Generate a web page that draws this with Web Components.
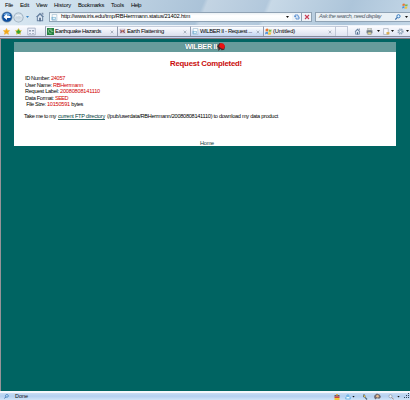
<!DOCTYPE html>
<html lang="en"><head><meta charset="utf-8"><title>Wilber II</title>
<style>html,body{margin:0;width:410px;height:400px;overflow:hidden}</style></head><body>
<wilber-browser></wilber-browser>
<script>
class FitText extends HTMLElement{
  connectedCallback(){
    const r=this.attachShadow({mode:'open'}),w=+this.getAttribute('w');
    r.innerHTML='<style>:host{display:block;flex:none;white-space:pre;line-height:1;overflow:visible}span{display:inline-block}</style><span></span>';
    const s=r.querySelector('span');s.textContent=this.getAttribute('text');
    this.style.width=w+'px';
    s.style.letterSpacing=(w-s.getBoundingClientRect().width)/s.textContent.length+'px';
  }
}
customElements.define('fit-text',FitText);

const shapes={
 back:'<circle cx="6" cy="6" r="5.6" fill="#7d96ac"/><circle cx="6" cy="6" r="4.8" fill="#0b4da0"/><path d="M2.5 3.5Q6 0 9.5 3.5L8 5H4Z" fill="#6fa5dc"/><path d="M2.4 6 6 3v2h3.5v2H6v2Z" fill="#fff"/>',
 fwd:'<circle cx="6" cy="6" r="5.5" fill="#95a9ba"/><circle cx="6" cy="6" r="4.7" fill="#d3dfe9"/><path d="M2 5Q6 1 10 5Z" fill="#f0f6fa"/><path d="M9.5 6 6 3.5V5H3v2h3v1.5Z" fill="#c9d6e0"/>',
 home:'<path d="M1 6 6 1l5 5H9.8v5H2.2V6Z" fill="#657f9f"/><path d="M3.4 6 6 3.4 8.6 6v4H3.4Z" fill="#dce8f3"/><path d="M5 7h2v4H5Z" fill="#536b8a"/><path d="M8 1h2v3L8 2.5Z" fill="#7c8ea8"/>',
 page:'<path d="M2 1h8v10H2Z" fill="#fff" stroke="#8fb0c8"/><path d="M1 5h7v5H1Z" fill="#75aed0"/><path d="M3 6h4v3H3Z" fill="#dff2fa"/>',
 star:'<path d="m6 1 1.6 3.2 3.6.4-2.7 2.5.8 3.7L6 9l-3.4 1.8.8-3.7L.8 4.6l3.6-.4Z" fill="#f2a719" stroke="#f0b336" stroke-width="1.2"/>',
 plus:'<path d="m6 1 1.6 3.2 3.6.4-2.7 2.5.8 3.7L6 9l-3.4 1.8.8-3.7L.8 4.6l3.6-.4Z" fill="#dfb62d" stroke="#dfb62d"/><path d="M4.5 3h3v2h2v3h-2v2h-3V8h-2V5h2Z" fill="#35a52e"/>',
 grid:'<path d="M1 1.5h10v9H1Z" fill="#edf1fb" stroke="#9ba5bb"/><path d="M3 4h2v2H3Zm4 0h2v2H7ZM3 8h2v1H3Zm4 0h2v1H7Z" fill="#79869e"/>',
 green:'<path d="M0 0h12v12H0Z" fill="#278243"/><path d="M8 2H4L2 5l2 4h4M7 6h4M5 4h4" stroke="#b7e5b4" fill="none"/>',
 earth:'<path d="M1 1h10v9H1Z" fill="#dcd3df"/><path d="m1 2 5 3 4-3-1 4 2 3-5-2-4 2 1-4Z" fill="#794460"/><circle cx="6" cy="5" r="1.5" fill="#e28b5d"/>',
 win:'<path d="M1 2Q4 0 6 2L5 6Q3 5 1 6Z" fill="#e87532"/><path d="M7 2Q9 4 11 2v4Q8 7 6 6Z" fill="#79b84c"/><path d="M1 7q3-1 4 0v4Q3 9 0 11Z" fill="#4a91dc"/><path d="M6 7q3 1 5 0l-1 4q-3 1-5 0Z" fill="#f2c441"/>',
 refresh:'<path d="M2 5V2l6 0v3M10 7v3H4V7" fill="none" stroke="#4a87cf" stroke-width="1.7"/><path d="M0 4h5L2 7Zm7 3h5L9 4Z" fill="#4a87cf"/>',
 stop:'<path d="m2 2 8 8M10 2l-8 8" stroke="#c93e54" stroke-width="2.2"/>',
 close:'<path d="m2 2 8 8M10 2l-8 8" stroke="#8d98a7" stroke-width="2"/>',
 search:'<circle cx="7" cy="4.5" r="3.2" fill="#e4f3ff" stroke="#3478bc" stroke-width="2"/><path d="m4.5 7-4 4" stroke="#386ca8" stroke-width="2.2"/>',
 zoom:'<circle cx="5" cy="4.5" r="3.2" fill="#edf5fb" stroke="#929eaf" stroke-width="1.5"/><path d="m7.5 7 4 4" stroke="#a17464" stroke-width="1.8"/>',
 tool:'<path d="M2 1h4l1 5 4 4-2 2-4-5-3-1Z" fill="#536779"/><path d="m3 2 3 1 1 4-3-1Z" fill="#edc650"/>',
 print:'<path d="M3 0h6v4H3Z" fill="#e8e9e5" stroke="#82898b"/><path d="M1 4h10v5H1Z" fill="#6f7b81"/><path d="M3 7h6v4H3Z" fill="#e6d993" stroke="#7c858c"/>',
 doc:'<path d="M1 1h8v10H1Z" fill="#f8faff" stroke="#939aaa"/><path d="M6 7h5v4H6Z" fill="#d8ad52"/>',
 gear:'<circle cx="6" cy="6" r="4" fill="#d6e4f0" stroke="#91a3b7" stroke-width="2.6" stroke-dasharray="2 1"/><circle cx="6" cy="6" r="2" fill="#f8fbff" stroke="#788ca3"/>',
 flag:'<path d="M1 2h10v3H1Z" fill="#635a68"/><path d="M1 5h10v3H1Z" fill="#d64237"/><path d="M1 8h10v4H1Z" fill="#f1ca36"/><path d="M4 0h4v3H4Z" fill="#dfac51"/>',
 cloud:'<path d="M6 0 9 3 8 5q4 0 4 3 0 3-3 3H3q-3 0-3-3 0-2 3-3L2 3Z" fill="#79b9e7"/><path d="M3 6h6v3H3Z" fill="#edfaff"/>',
 blob:'<path d="M1 4 5 1l5 2 2 4-3 3-4-1-3 2-2-4Z" fill="#716a70"/><path d="m3 5 3-2 3 2-2 3-3-1Z" fill="#e6bd93"/>',
 quake:'<path d="m4 0 5 1 3 4-1 5-4 1-2-2-3 3V8L0 5Z" fill="#48282a"/><path d="m5 0 5 1 2 4-2 4-4-1-3-3Z" fill="#ed1111"/>'
};
class UiIcon extends HTMLElement{
  connectedCallback(){
    const s=this.getAttribute('s')||8;
    this.attachShadow({mode:'open'}).innerHTML=`<style>:host{display:block;flex:none;width:${s}px;height:${s}px}svg{display:block}</style><svg width="${s}" height="${s}" viewBox="0 0 12 12">${shapes[this.getAttribute('n')]}</svg>`;
  }
}
customElements.define('ui-icon',UiIcon);

class DropArrow extends HTMLElement{
  connectedCallback(){this.attachShadow({mode:'open'}).innerHTML='<style>:host{display:block;flex:none;width:3px;height:2px;background:var(--c,#111);clip-path:polygon(0 0,100% 0,50% 100%)}</style>'}
}
customElements.define('drop-arrow',DropArrow);

class BrowserTab extends HTMLElement{
  connectedCallback(){this.attachShadow({mode:'open'}).innerHTML='<style>:host{display:flex;flex:none;box-sizing:border-box;align-items:center;border-left:1px solid #929baf;border-top:1px solid #c5cddb;background:linear-gradient(#fbfcff,#dadfed);padding:0 3px 0 1px;gap:1px}:host([active]){background:linear-gradient(#fff,#c3d5f2)}.x{margin-left:auto}</style><slot></slot><ui-icon class="x" n="close" s="4"></ui-icon>'}
}
customElements.define('browser-tab',BrowserTab);

class BrowserChrome extends HTMLElement{
  connectedCallback(){this.attachShadow({mode:'open'}).innerHTML=`<style>
  :host{display:block;height:39px;background:linear-gradient(112deg,#dce9f3 0,#ccdeeb 17%,#b8cddf 35%,#abc3d8 48%,#c3d4e3 49%,#b2c8dc 63%,#c8d9e7 64%,#adc5da 83%,#c4d7e7 100%);font:5.8px "Liberation Sans",sans-serif;color:#000}
  div{display:flex;align-items:center;box-sizing:border-box}
  .menu{height:11px;padding:0 2px 0 5px}.menu fit-text{margin-right:7px}.menu ui-icon{margin-left:auto}
  .nav{height:12px;padding-left:1px}
  .addr{height:10px;width:243px;margin-left:4px;background:linear-gradient(#e9f0f4,#fff 35%,#f6fafc);border:1px solid #8fa2b4;border-right:0;padding:0 3px 0 1px;gap:3px}
  .addr drop-arrow{margin-left:auto}
  .btn{height:10px;width:10px;background:#edf3f8;border:1px solid #8fa2b4;border-left:0;justify-content:center}
  .find{height:10px;flex:1;margin-left:3px;background:#e9f0f5;border:1px solid #8fa2b4;border-right:0;padding:0 2px 0 3px;gap:4px;color:#53606b;font-style:italic}
  .find ui-icon{margin-left:auto}
  .gap{height:2px}
  .tabs{height:11px;background:linear-gradient(#fbfcff,#dfe4f2);border-top:1px solid #eff4fa;align-items:stretch}
  .fav{width:45px;padding-left:3px;gap:5px}
  .new{width:13px;border:1px solid #c1c8d8;border-width:1px 1px 0}
  .cmd{flex:1;justify-content:flex-end;padding-right:1px}
  .cmd drop-arrow{margin:0 3px 0 4px}.cmd drop-arrow:last-child{margin:0 0 0 2px}
  .edge{height:3px;background:linear-gradient(#85899b 33%,#c1cff0 33% 66%,#85787e 66%)}
  </style>
  <div class="menu"><fit-text text="File" w="8"></fit-text><fit-text text="Edit" w="9"></fit-text><fit-text text="View" w="11"></fit-text><fit-text text="History" w="17"></fit-text><fit-text text="Bookmarks" w="26"></fit-text><fit-text text="Tools" w="13"></fit-text><fit-text text="Help" w="10"></fit-text><ui-icon n="win" s="6"></ui-icon></div>
  <div class="nav"><ui-icon n="back" s="12"></ui-icon><ui-icon n="fwd" s="11"></ui-icon><drop-arrow style="--c:#3c86c5;margin:0 6px 0 2px"></drop-arrow><ui-icon n="home" s="10"></ui-icon>
   <div class="addr"><ui-icon n="page" s="7"></ui-icon><fit-text text="http://www.iris.edu/tmp/RBHerrmann.status/21402.htm" w="129"></fit-text><drop-arrow></drop-arrow></div><div class="btn"><ui-icon n="refresh" s="6"></ui-icon></div><div class="btn"><ui-icon n="stop" s="6"></ui-icon></div>
   <div class="find"><fit-text text="Ask the search, need display" w="62"></fit-text><ui-icon n="search" s="6"></ui-icon><drop-arrow></drop-arrow></div></div>
  <div class="gap"></div>
  <div class="tabs"><div class="fav"><ui-icon n="star" s="7"></ui-icon><ui-icon n="plus" s="7"></ui-icon><ui-icon n="grid" s="9"></ui-icon></div>
   <browser-tab style="width:72px"><ui-icon n="green" s="7"></ui-icon><fit-text text="Earthquake Hazards" w="46"></fit-text></browser-tab>
   <browser-tab style="width:73px"><ui-icon n="earth" s="7"></ui-icon><fit-text text="Earth Flattening" w="37"></fit-text></browser-tab>
   <browser-tab active style="width:73px"><ui-icon n="page" s="7"></ui-icon><fit-text text="WILBER II - Request ..." w="52"></fit-text></browser-tab>
   <browser-tab style="width:72px"><ui-icon n="win" s="7"></ui-icon><fit-text text="(Untitled)" w="22"></fit-text></browser-tab>
   <div class="new"></div><div class="cmd"><ui-icon n="home" s="7"></ui-icon><ui-icon n="print" s="7" style="margin-left:5px"></ui-icon><drop-arrow></drop-arrow><ui-icon n="doc" s="7"></ui-icon><drop-arrow style="margin-left:1px"></drop-arrow><ui-icon n="gear" s="7"></ui-icon><drop-arrow></drop-arrow></div></div>
  <div class="edge"></div>`}
}
customElements.define('browser-chrome',BrowserChrome);

class ResultPanel extends HTMLElement{
  connectedCallback(){this.attachShadow({mode:'open'}).innerHTML=`<style>
  :host{display:block;width:382px;height:104px;background:#fff;font:5.6px "Liberation Sans",sans-serif;color:#000}
  header{height:10px;background:#669b9b;display:flex;align-items:center;justify-content:center;gap:0;color:#fff;font-size:7.3px;font-weight:bold;text-shadow:0 0 1px #355}
  h1{margin:7.5px 0 7px;padding-left:2px;height:9px;font-size:7.8px;display:flex;justify-content:center;color:#c90c0c}
  .row{display:flex;height:6.6px;padding-left:11px;align-items:center}
  .row fit-text+fit-text{color:#d00000}
  .path{display:flex;margin-top:5px;height:7px;padding-left:10px;gap:2px;align-items:center}
  a{color:#064040;text-decoration:none}a fit-text{border-bottom:1px solid #286868;height:5px}
  footer{margin-top:20.5px;display:flex;justify-content:center;color:#153f3f;padding-left:4px}
  </style><header><fit-text text="WILBER II" w="32"></fit-text><ui-icon n="quake" s="8"></ui-icon></header>
  <h1><fit-text text="Request Completed!" w="72"></fit-text></h1>
  <div class="row"><fit-text text="ID Number: " w="26"></fit-text><fit-text text="24057" w="14"></fit-text></div>
  <div class="row"><fit-text text="User Name: " w="28"></fit-text><fit-text text="RBHerrmann" w="30"></fit-text></div>
  <div class="row"><fit-text text="Request Label: " w="35"></fit-text><fit-text text="20080808141110" w="40"></fit-text></div>
  <div class="row"><fit-text text="Data Format: " w="30"></fit-text><fit-text text="SEED" w="13"></fit-text></div>
  <div class="row"><fit-text text=" File Size: " w="22"></fit-text><fit-text text="10150591" w="23"></fit-text><fit-text text=" bytes" w="13" style="color:#000"></fit-text></div>
  <div class="path"><fit-text text="Take me to my" w="32"></fit-text><a><fit-text text="current FTP directory" w="47"></fit-text></a><fit-text text="(/pub/userdata/RBHerrmann/20080808141110) to download my data product" w="171"></fit-text></div>
  <footer><fit-text text="Home" w="14"></fit-text></footer>`}
}
customElements.define('result-panel',ResultPanel);

class StatusBar extends HTMLElement{
  connectedCallback(){this.attachShadow({mode:'open'}).innerHTML=`<style>
  :host{display:flex;box-sizing:border-box;height:9px;border-top:2px solid #f4f7fb;background:linear-gradient(#c8dcf4,#b5d0f0 45%,#d2e4f8);align-items:center;padding:0 0 0 4px;font:5.5px "Liberation Sans",sans-serif;color:#111}
  i{flex:1}drop-arrow{margin-left:1px}
  svg{display:block;margin-left:3px}</style><ui-icon n="search" s="5"></ui-icon><fit-text text="Done" w="13" style="margin-left:6px"></fit-text><i></i>
  <ui-icon n="flag" s="6"></ui-icon><ui-icon n="cloud" s="6" style="margin-left:5px"></ui-icon><drop-arrow></drop-arrow><ui-icon n="tool" s="6" style="margin-left:7px"></ui-icon><ui-icon n="blob" s="7" style="margin-left:6px"></ui-icon><ui-icon n="zoom" s="6" style="margin-left:7px"></ui-icon><drop-arrow style="margin-left:3px"></drop-arrow><svg width="7" height="7"><path d="M5 0h1v1H5ZM3 2h1v1H3ZM5 2h1v1H5ZM1 4h1v1H1ZM3 4h1v1H3ZM5 4h1v1H5Z" fill="#31435a"/></svg>`}
}
customElements.define('status-bar',StatusBar);

class WilberBrowser extends HTMLElement{
  connectedCallback(){this.attachShadow({mode:'open'}).innerHTML=`<style>
  :host{display:grid;grid-template:39px 352px 9px/410px;width:410px;height:400px;overflow:hidden}
  main{background:#006462;border-left:1px solid #969398;padding:3px 0 0 13px}
  </style><browser-chrome></browser-chrome><main><result-panel></result-panel></main><status-bar></status-bar>`}
}
customElements.define('wilber-browser',WilberBrowser);
</script></body></html>
